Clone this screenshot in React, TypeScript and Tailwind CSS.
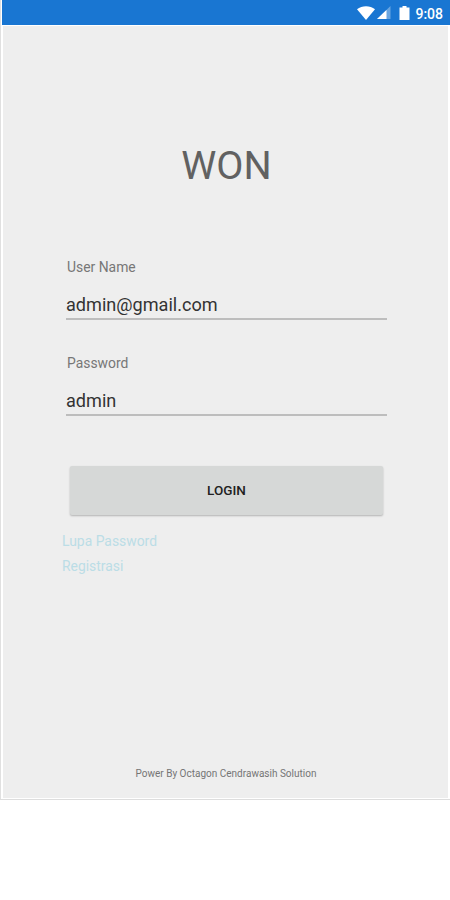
import React, { useState } from "react";

interface FieldProps {
  id: string;
  label: string;
  value: string;
  onChange: (value: string) => void;
}

function StatusBar() {
  return (
    <div className="flex h-[25px] items-center justify-end bg-[#1976d2] pr-[7px] text-white">
      <svg className="h-[14px] w-[18px]" viewBox="0 0 18 14" fill="currentColor">
        <path d="M0 3.2C5 -.8 13 -.8 18 3.2L9 14Z" />
      </svg>
      <svg className="ml-[2px] h-[13px] w-[14px]" viewBox="0 0 14 13" fill="currentColor">
        <path d="M13.5 0V13H0Z" opacity=".35" />
        <path d="M9.5 4V13H0Z" />
      </svg>
      <svg className="ml-[8px] h-[14px] w-[11px]" viewBox="0 0 11 14" fill="currentColor">
        <path d="M3.5 0H7.5V1.5H10.5V14H.5V1.5H3.5Z" />
      </svg>
      <span className="ml-[5px] pt-[3px] text-[14px] leading-none font-medium">9:08</span>
    </div>
  );
}

function Field({ id, label, value, onChange }: FieldProps) {
  return (
    <div className="flex h-24 flex-col">
      <label htmlFor={id} className="pt-px pl-px text-[13.9px] leading-[19px] text-[#777777]">
        {label}
      </label>
      <input
        id={id}
        value={value}
        onChange={(e) => onChange(e.target.value)}
        className="mt-[15px] h-[28px] w-full border-b-2 border-[#bdbdbd] bg-transparent pb-px text-[18.1px] leading-6 text-[#333333] outline-none"
      />
    </div>
  );
}

export default function App() {
  const [userName, setUserName] = useState("admin@gmail.com");
  const [password, setPassword] = useState("admin");

  return (
    <div className="min-h-screen bg-white font-['Roboto','Liberation_Sans',sans-serif]">
      <div className="h-[800px] border-b border-l border-b-[#dddddd] border-l-[#e0e0e0] pr-[2px] pb-px pl-[2px]">
        <div className="-mr-[2px] -ml-px">
          <StatusBar />
        </div>

        <div className="mt-px flex h-[772px] flex-col bg-[#eeeeee]">
          <h1 className="mt-[116px] pl-[2px] text-center text-[39.5px] leading-[48px] text-[#616161]">WON</h1>

          <form className="mt-[67px] pr-[61px] pl-[63px]" onSubmit={(e) => e.preventDefault()}>
            <Field id="username" label="User Name" value={userName} onChange={setUserName} />
            <Field id="password" label="Password" value={password} onChange={setPassword} />
            <button
              type="submit"
              className="mt-[17px] ml-[4px] block h-[49px] w-[313px] rounded-[2px] bg-[#d6d8d7] pb-px text-[13.5px] font-medium text-[#212121] shadow-[0_1px_2px_rgba(0,0,0,0.25)]"
            >
              LOGIN
            </button>
          </form>

          <div className="mt-[14px] flex flex-col items-start pl-[59px] text-[13.9px] leading-[25px] text-[#bbdde6]">
            <a href="#">Lupa Password</a>
            <a href="#">Registrasi</a>
          </div>

          <p className="mt-auto mb-[14px] pl-px text-center text-[10px] leading-[20px] text-[#757575]">
            Power By Octagon Cendrawasih Solution
          </p>
        </div>
      </div>
    </div>
  );
}
